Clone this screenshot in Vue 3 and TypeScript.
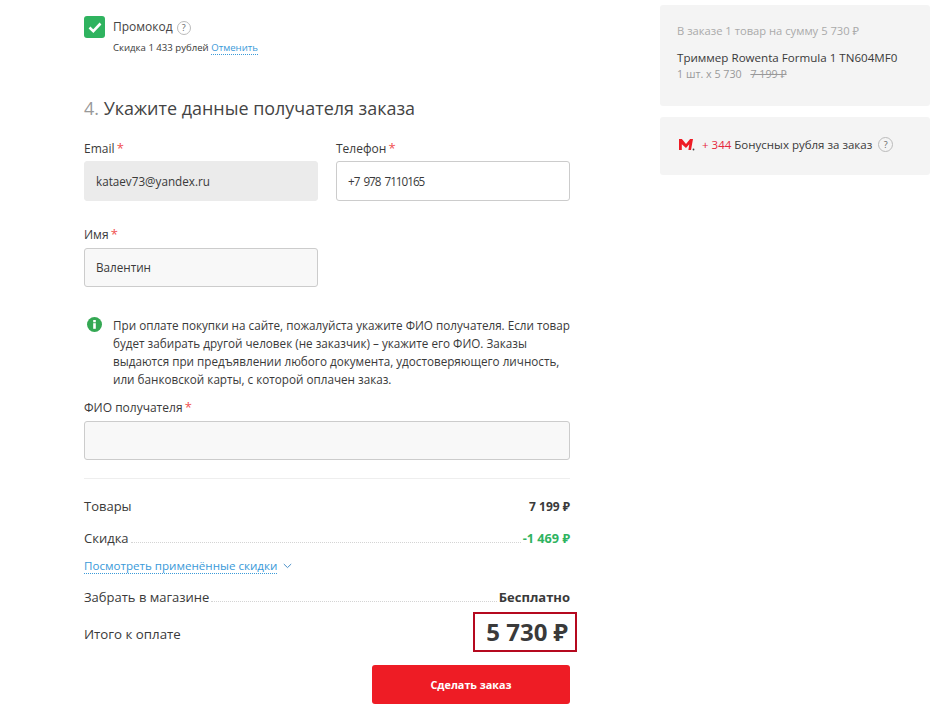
<template>
  <div class="page">
    <main class="main">
      <div class="promo">
        <span class="promo-check">
          <svg width="14" height="11" viewBox="0 0 14 11"><path d="M1.5 5.500l3.800 3.600 7.200-7.600" fill="none" stroke="#fff" stroke-width="2.600" /></svg>
        </span>
        <div>
          <div class="promo-title">Промокод <span class="hint">?</span></div>
          <div class="promo-sub">Скидка 1 433 рублей <a class="link">Отменить</a></div>
        </div>
      </div>

      <h2 class="step"><span class="step-num">4.</span> Укажите данные получателя заказа</h2>

      <div class="fields">
        <label class="field">
          <span class="label">Email <i>*</i></span>
          <span class="input disabled">kataev73@yandex.ru</span>
        </label>
        <label class="field">
          <span class="label">Телефон <i>*</i></span>
          <span class="input white phone">+7 978 7110165</span>
        </label>
      </div>
      <label class="field name-field">
        <span class="label">Имя <i>*</i></span>
        <span class="input short">Валентин</span>
      </label>

      <div class="notice">
        <svg class="notice-icon" width="15" height="15" viewBox="0 0 15 15">
          <circle cx="7.500" cy="7.500" r="7.500" fill="#34a853" />
          <rect x="6.200" y="6.200" width="2.600" height="5.600" fill="#fff" />
          <rect x="6.200" y="3" width="2.600" height="2.300" fill="#fff" />
        </svg>
        <p>При оплате покупки на сайте, пожалуйста укажите ФИО получателя. Если товар будет забирать другой человек (не заказчик) – укажите его ФИО. Заказы выдаются при предъявлении любого документа, удостоверяющего личность, или банковской карты, с которой оплачен заказ.</p>
      </div>

      <label class="field fio-field">
        <span class="label">ФИО получателя <i>*</i></span>
        <span class="input"></span>
      </label>

      <div class="summary">
        <div class="row first">
          <span>Товары</span>
          <b class="small">7 199 ₽</b>
        </div>
        <div class="row discount">
          <span>Скидка</span>
          <span class="dots"></span>
          <b class="small green">-1 469 ₽</b>
        </div>
        <div class="row-link">
          <a class="link">Посмотреть применённые скидки</a>
          <svg width="9" height="6" viewBox="0 0 9 6"><path d="M.8 1l3.700 3.600L8.200 1" fill="none" stroke="#4a90c8" stroke-width="1" /></svg>
        </div>
        <div class="row pickup">
          <span>Забрать в магазине</span>
          <span class="dots"></span>
          <b class="free">Бесплатно</b>
        </div>
        <div class="row total">
          <span class="total-label">Итого к оплате</span>
          <b class="total-sum">5 730 ₽</b>
        </div>
      </div>

      <div class="actions">
        <button class="submit" type="button">Сделать заказ</button>
      </div>
    </main>

    <aside class="side">
      <div class="box order">
        <div class="order-head">В заказе 1 товар на сумму 5 730 ₽</div>
        <div class="order-name">Триммер Rowenta Formula 1 TN604MF0</div>
        <div class="order-qty">1 шт. x 5 730 <s>7 199 ₽</s></div>
      </div>
      <div class="box bonus">
        <svg class="bonus-logo" width="17" height="13" viewBox="0 0 17 13">
          <path d="M1 12V1h2.900L8 6l4.100-5H15l-2 11h-2.600l.9-5.800L8 10 3.800 6.200V12z" fill="#ee1c25" />
          <circle cx="15.500" cy="11.500" r=".9" fill="#444" />
        </svg>
        <span class="bonus-text"><em>+ 344</em> Бонусных рубля за заказ</span>
        <span class="hint large">?</span>
      </div>
    </aside>
  </div>
</template>

<script setup lang="ts">
</script>

<style>
body {
  background: #fff;
}
</style>

<style scoped>
.page {
  display: flex;
  align-items: flex-start;
  width: 946px;
  height: 708px;
  overflow: hidden;
  box-sizing: border-box;
  padding: 5px 16px 0 84px;
  font-family: "Open Sans", "Noto Sans", sans-serif;
  color: #3a3a3a;
}

.main {
  width: 486px;
  flex: none;
}

.side {
  width: 270px;
  margin-left: 90px;
  flex: none;
}

.promo {
  display: flex;
  margin-top: 11px;
  gap: 8px;
}

.promo-check {
  display: flex;
  align-items: center;
  justify-content: center;
  width: 21px;
  height: 22px;
  background: #2fb35f;
  border-radius: 3px;
}

.promo-title {
  font-size: 12px;
  line-height: 22px;
  color: #444;
}

.promo-sub {
  font-size: 9.600px;
  line-height: 14px;
  margin-top: 3px;
}

.hint {
  display: inline-block;
  width: 14px;
  height: 14px;
  box-sizing: border-box;
  border: 1px solid #bbb;
  border-radius: 50%;
  font-size: 9px;
  line-height: 12px;
  text-align: center;
  color: #666;
  margin-left: 1px;
}

.hint.large {
  width: 15px;
  height: 15px;
  line-height: 13px;
  margin-left: -1px;
}

.link {
  color: #3a9ad9;
  border-bottom: 1px dotted #3a9ad9;
}

.step {
  margin: 41px 0 0;
  font-size: 17.950px;
  line-height: 24px;
  font-weight: 400;
  color: #444;
}

.step-num {
  color: #999;
}

.fields {
  display: grid;
  grid-template-columns: 234px 234px;
  gap: 18px;
  margin-top: 21px;
}

.field {
  display: block;
}

.label {
  display: block;
  font-size: 12px;
  line-height: 16px;
  margin-bottom: 4px;
}

.label i {
  color: #f05050;
  font-style: normal;
  font-size: 13px;
  line-height: 13px;
  margin-left: -1px;
}

.input {
  display: block;
  box-sizing: border-box;
  height: 40px;
  padding: 0 11px;
  border: 1px solid #ccc;
  border-radius: 3px;
  background: #f8f8f8;
  font-size: 11.700px;
  line-height: 38px;
}

.input.disabled {
  background: #ebebeb;
  border-color: #ebebeb;
}

.input.white {
  background: #fff;
}

.phone {
  letter-spacing: -1px;
  word-spacing: 2px;
}

.input.short {
  width: 234px;
  height: 39px;
  line-height: 37px;
}

.name-field {
  margin-top: 26px;
}

.name-field .label {
  margin-bottom: 5px;
}

.notice {
  display: flex;
  gap: 11px;
  margin: 29px 0 0 3px;
}

.notice-icon {
  flex: none;
  margin-top: 1px;
}

.notice p {
  margin: 0;
  font-size: 11.700px;
  line-height: 18px;
}

.fio-field {
  margin-top: 12px;
}

.fio-field .label {
  margin-bottom: 5px;
}

.fio-field .input {
  height: 39px;
}

.summary {
  margin-top: 18px;
  border-top: 1px solid #eee;
}

.row {
  display: flex;
  align-items: baseline;
  justify-content: space-between;
  font-size: 13px;
  line-height: 18px;
}

.first {
  margin-top: 18px;
}

.discount {
  margin-top: 13px;
}

.pickup {
  margin-top: 14px;
}

.total {
  align-items: center;
  margin-top: 6px;
  margin-right: -7px;
}

.total-label {
  font-size: 13.300px;
  margin-top: 4px;
}

.dots {
  flex: 1;
  margin: 0 2px;
  border-bottom: 1px dotted #d4d4d4;
}

.small {
  font-size: 12px;
}

.green {
  color: #2fb35f;
  font-size: 12.700px;
}

.free {
  font-size: 13px;
}

.row-link {
  display: flex;
  align-items: center;
  gap: 6px;
  margin-top: 11px;
  font-size: 11.600px;
  line-height: 15px;
}

.total-sum {
  box-sizing: border-box;
  width: 104px;
  height: 40px;
  padding-right: 7px;
  border: 2px solid #b5091f;
  font-size: 24px;
  line-height: 36px;
  text-align: right;
}

.actions {
  display: flex;
  justify-content: flex-end;
  margin-top: 13px;
}

.submit {
  width: 198px;
  height: 39px;
  border: none;
  border-radius: 3px;
  background: #ee1c25;
  color: #fff;
  font-family: inherit;
  font-size: 10.800px;
  font-weight: 700;
}

.box {
  background: #f4f4f4;
  border-radius: 3px;
  padding: 0 17px;
}

.order {
  height: 101px;
  box-sizing: border-box;
  padding-top: 18px;
}

.order-head {
  font-size: 11.200px;
  line-height: 16px;
  color: #aaa;
}

.order-name {
  margin-top: 11px;
  font-size: 11.600px;
  line-height: 16px;
}

.order-qty {
  font-size: 10.700px;
  line-height: 16px;
  color: #999;
}

.order-qty s {
  margin-left: 6px;
}

.bonus {
  display: flex;
  align-items: center;
  height: 58px;
  box-sizing: border-box;
  padding-bottom: 4px;
  margin-top: 11px;
  gap: 7px;
}

.bonus-logo {
  margin-left: 1px;
}

.bonus-text {
  font-size: 11.500px;
}

.bonus-text em {
  font-style: normal;
  color: #e6283c;
}
</style>
